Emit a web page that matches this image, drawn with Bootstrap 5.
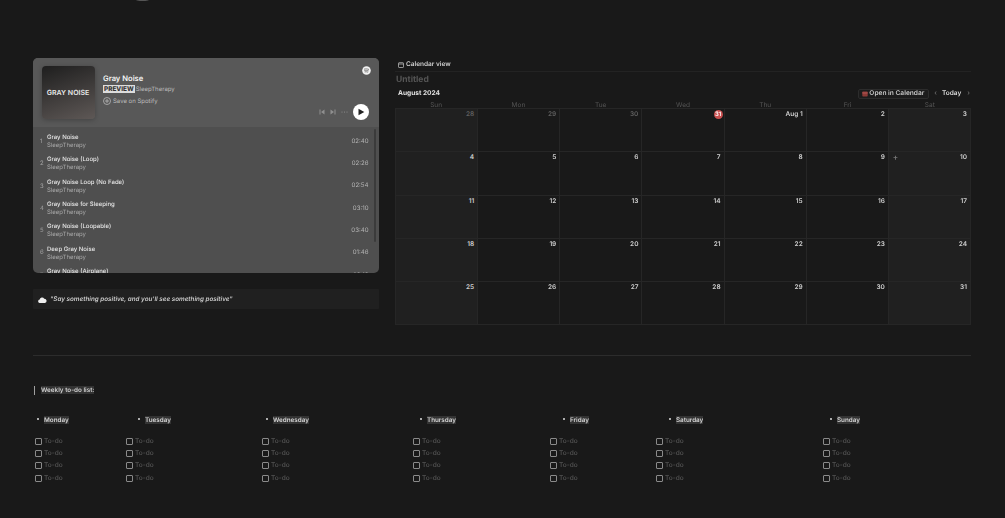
<!DOCTYPE html>
<html lang="en"><head><meta charset="utf-8"><title>Dashboard</title>
<link href="https://cdn.jsdelivr.net/npm/bootstrap@5.3.0/dist/css/bootstrap.min.css" rel="stylesheet">
<style>
html,body{height:518px;overflow:hidden}
body{background:#191919;color:#d4d4d4;font-family:Inter,"Liberation Sans",sans-serif;font-size:6.5px;line-height:1.2;position:relative;text-rendering:geometricPrecision}
.page{width:1005px;height:518px;padding:58px 34px 0 33px;filter:blur(.4px)}
.topcurve{position:absolute;left:135px;top:-3px;width:15px;height:4px;border-radius:50%;background:#555}
.leftcol{width:346px;flex:none}
.rightcol{width:576px;flex:none;margin-left:16px}
.player{height:215px;background:#4f4f4f;border-radius:5px;overflow:hidden;position:relative}
.phead{height:69px;background:#585858;padding:8px 0 0 8.5px;position:relative}
.cover{width:53px;height:53px;flex:none;border-radius:4px;background:linear-gradient(160deg,#1e1e1e,#5e5856);color:#e8e8e8;font-weight:600;font-size:7px;padding-top:1px;box-shadow:0 1px 5px rgba(0,0,0,.25)}
.pinfo{margin-left:8.5px;padding-top:8px}
.ptitle{font-size:7.6px;font-weight:600;color:#f4f4f4;line-height:10px}
.psub{font-size:6px;color:#bcbcbc;line-height:8px;margin-top:1px}
.prev{background:#dcdcdc;color:#333;font-weight:800;font-size:6.4px;margin-right:1px;padding:0 1px}
.psave{font-size:6px;color:#bcbcbc;margin-top:2.5px;line-height:9px;gap:2px}
.sp-logo{position:absolute;right:8.5px;top:8px}
.pctrl{position:absolute;right:10px;top:46px;gap:5px}
.pplay{width:16px;height:16px;border-radius:50%;background:#fff}
.plist{padding:3.4px 0 0 7px;height:146px;overflow:hidden}
.track{height:22.3px;padding-right:10.5px}
.tnum{width:7px;color:#a5a5a5;font-size:6px}
.tname{font-size:6px;font-weight:500;color:#e6e6e6;line-height:8px;margin-top:1px}
.tart{font-size:6px;color:#a8a8a8;line-height:8px}
.tdur{font-size:6.1px;color:#b5b5b5}
.scrollthumb{position:absolute;right:3px;top:71px;width:2px;height:113px;border-radius:1px;background:#3b3b3b}
.quote{margin-top:16px;height:20px;background:#202020;padding:1px 0 0 5px;color:#c8c8c8;font-style:italic;font-weight:600;font-size:6.3px;border-radius:1px;gap:3px}
.calhead{height:12px;color:#d0d0d0;font-weight:600;font-size:6.5px;padding:1px 0 0 3px;border-bottom:1px solid #232323;box-sizing:content-box;gap:2px}
.untitled{color:#555;font-weight:700;font-size:8.5px;line-height:10px;margin-top:3px;padding-left:1px}
.tool{height:12px;margin-top:3px;padding:0 1px 0 3px;font-size:6.5px;font-weight:600;color:#dcdcdc}
.opencal{border:1px solid #2c2c2c;border-radius:2px;padding:0 4px 0 3px;height:10px;color:#c8c8c8;background:#1c1c1c;font-size:6.6px;gap:1px}
.calmo{font-size:6.6px;font-weight:700;color:#e0e0e0}
.dim{color:#6a6a6a}
.chev{margin-left:5px}
.today{margin:0 6px 0 5px}
.wk{display:grid;grid-template-columns:repeat(7,1fr);color:#555;font-size:6.5px;text-align:center;height:9px;line-height:12px;margin-top:-1px}
.cal{display:grid;grid-template-columns:repeat(7,1fr);grid-auto-rows:43.3px;border-top:1px solid #262626;border-left:1px solid #262626}
.day{border-right:1px solid #262626;border-bottom:1px solid #262626;padding:2px 3px;text-align:right;font-size:6.5px;font-weight:600;color:#cfcfcf;position:relative}
.wkend{background:#202020}
.old{color:#5f5f5f}
.todaybadge{display:inline-block;width:9px;height:9px;line-height:9px;border-radius:50%;background:#c94f4f;color:#fff;text-align:center;font-size:6px;margin:-1px -2px 0 0}
.plus{position:absolute;left:4px;top:1px;color:#777;font-size:8px}
.rule{height:1px;background:#2c2c2c;margin-top:30px}
.wtitle{margin-top:30px;height:9px;margin-left:1px;border-left:1px solid #a0a0a0;padding-left:6px;font-weight:600;font-size:6.3px;color:#cfcfcf;line-height:9px}
.hl{background:#333}
.todos{display:grid;grid-template-columns:92px 136px 151px 137px 106px 167px 1fr;margin-top:20.5px;margin-left:1px}
.dayname{font-weight:600;font-size:6.3px;color:#d4d4d4;line-height:9px;height:9px;margin-bottom:12px}
.dayname::before{content:"";display:inline-block;width:2px;height:2px;border-radius:50%;background:#ddd;vertical-align:1.5px;margin-right:5px}
.p4{padding-left:3px}.p13{padding-left:12px}.p5{padding-left:4px}.p9{padding-left:7px}.p14{padding-left:13px}.p8{padding-left:7px}
.todo{height:12.2px;color:#565656;font-size:6.5px;line-height:9px;font-weight:500}
.firstcol .todo{padding-left:1px}
.cbx{border:1px solid #8a8a8a;border-radius:1px;flex:none;margin:1px 2px 0 0;box-sizing:content-box;width:5px;height:5px}
</style></head><body>
<div class="topcurve"></div>
<div class="page">
 <div class="d-flex">
  <div class="leftcol">
   <div class="player">
    <div class="phead d-flex">
     <div class="cover d-flex align-items-center justify-content-center">GRAY NOISE</div>
     <div class="pinfo">
      <div class="ptitle">Gray Noise</div>
      <div class="psub"><span class="prev">PREVIEW</span>SleepTherapy</div>
      <div class="psave d-flex align-items-center"><svg width="8" height="8" viewBox="0 0 8 8" fill="none" stroke="#c4c4c4" stroke-width=".7"><circle cx="4" cy="4" r="3.5"/><path d="M4 2v4M2 4h4"/></svg><span>Save on Spotify</span></div>
     </div>
     <svg class="sp-logo" width="9" height="9" viewBox="0 0 9 9"><circle cx="4.5" cy="4.5" r="4.3" fill="#f2f2f2"/><path d="M2 3.2c1.8-.5 3.5-.4 5 .3M2.3 4.6c1.5-.4 3-.3 4.3.3M2.6 5.9c1.2-.3 2.4-.2 3.5.3" stroke="#585858" stroke-width=".7" fill="none"/></svg>
     <div class="pctrl d-flex align-items-center">
      <svg width="6" height="6" viewBox="0 0 6 6" fill="#8f8f8f"><path d="M.5.5h1v5h-1zM5.5.5v5L2 3z"/></svg>
      <svg width="6" height="6" viewBox="0 0 6 6" fill="#8f8f8f"><path d="M4.5.5h1v5h-1zM.5.5v5L4 3z"/></svg>
      <svg width="7" height="4" viewBox="0 0 7 4" fill="#9a9a9a"><circle cx="1" cy="2" r=".5"/><circle cx="3.5" cy="2" r=".5"/><circle cx="6" cy="2" r=".5"/></svg>
      <div class="pplay d-flex align-items-center justify-content-center"><svg width="8" height="8" viewBox="0 0 8 8" fill="#222"><path d="M1.5.7v6.6L7.3 4z"/></svg></div>
     </div>
    </div>
    <div class="plist">
     <div class="track d-flex align-items-center"><div class="tnum">1</div><div class="flex-grow-1"><div class="tname">Gray Noise</div><div class="tart">SleepTherapy</div></div><div class="tdur">02:40</div></div>
     <div class="track d-flex align-items-center"><div class="tnum">2</div><div class="flex-grow-1"><div class="tname">Gray Noise (Loop)</div><div class="tart">SleepTherapy</div></div><div class="tdur">02:26</div></div>
     <div class="track d-flex align-items-center"><div class="tnum">3</div><div class="flex-grow-1"><div class="tname">Gray Noise Loop (No Fade)</div><div class="tart">SleepTherapy</div></div><div class="tdur">02:54</div></div>
     <div class="track d-flex align-items-center"><div class="tnum">4</div><div class="flex-grow-1"><div class="tname">Gray Noise for Sleeping</div><div class="tart">SleepTherapy</div></div><div class="tdur">03:10</div></div>
     <div class="track d-flex align-items-center"><div class="tnum">5</div><div class="flex-grow-1"><div class="tname">Gray Noise (Loopable)</div><div class="tart">SleepTherapy</div></div><div class="tdur">03:40</div></div>
     <div class="track d-flex align-items-center"><div class="tnum">6</div><div class="flex-grow-1"><div class="tname">Deep Gray Noise</div><div class="tart">SleepTherapy</div></div><div class="tdur">01:46</div></div>
     <div class="track d-flex align-items-center"><div class="tnum">7</div><div class="flex-grow-1"><div class="tname">Gray Noise (Airplane)</div><div class="tart">SleepTherapy</div></div><div class="tdur">02:12</div></div>
    </div>
    <div class="scrollthumb"></div>
   </div>
   <div class="quote d-flex align-items-center"><svg width="9" height="6" viewBox="0 0 9 6" fill="#eee"><path d="M2 6a1.7 1.7 0 0 1-.3-3.4A2.4 2.4 0 0 1 6.2 1.7 2.2 2.2 0 0 1 7 6z"/></svg><span>"Say something positive, and you'll see something positive"</span></div>
  </div>
  <div class="rightcol">
   <div class="calhead d-flex align-items-center"><svg width="6" height="6" viewBox="0 0 6 6" fill="none" stroke="#c8c8c8" stroke-width=".7"><rect x=".5" y=".7" width="5" height="4.8" rx=".6"/><path d="M.5 2h5"/></svg><span>Calendar view</span></div>
   <div class="untitled">Untitled</div>
   <div class="tool d-flex align-items-center">
    <div class="calmo me-auto">August 2024</div>
    <div class="opencal d-flex align-items-center"><svg width="6" height="6" viewBox="0 0 6 6"><rect x=".3" y=".5" width="5.4" height="5" rx=".7" fill="#8c3a36"/><path d="M.3 2h5.4" stroke="#d77" stroke-width=".5"/></svg>Open in Calendar</div>
    <span class="dim chev">‹</span><span class="today">Today</span><span class="dim">›</span>
   </div>
   <div class="wk"><div>Sun</div><div>Mon</div><div>Tue</div><div>Wed</div><div>Thu</div><div>Fri</div><div>Sat</div></div>
   <div class="cal">
    <div class="day wkend old">28</div><div class="day old">29</div><div class="day old">30</div><div class="day"><span class="todaybadge">31</span></div><div class="day">Aug 1</div><div class="day">2</div><div class="day wkend">3</div>
    <div class="day wkend">4</div><div class="day">5</div><div class="day">6</div><div class="day">7</div><div class="day">8</div><div class="day">9</div><div class="day wkend"><span class="plus">+</span>10</div>
    <div class="day wkend">11</div><div class="day">12</div><div class="day">13</div><div class="day">14</div><div class="day">15</div><div class="day">16</div><div class="day wkend">17</div>
    <div class="day wkend">18</div><div class="day">19</div><div class="day">20</div><div class="day">21</div><div class="day">22</div><div class="day">23</div><div class="day wkend">24</div>
    <div class="day wkend">25</div><div class="day">26</div><div class="day">27</div><div class="day">28</div><div class="day">29</div><div class="day">30</div><div class="day wkend">31</div>
   </div>
  </div>
 </div>
 <div class="rule"></div>
 <div class="wtitle"><span class="hl">Weekly to-do list:</span></div>
 <div class="todos">
  <div class="firstcol"><div class="dayname p4"><span class="hl">Monday</span></div><div class="todo d-flex"><div class="cbx"></div>To-do</div><div class="todo d-flex"><div class="cbx"></div>To-do</div><div class="todo d-flex"><div class="cbx"></div>To-do</div><div class="todo d-flex"><div class="cbx"></div>To-do</div></div>
  <div><div class="dayname p13"><span class="hl">Tuesday</span></div><div class="todo d-flex"><div class="cbx"></div>To-do</div><div class="todo d-flex"><div class="cbx"></div>To-do</div><div class="todo d-flex"><div class="cbx"></div>To-do</div><div class="todo d-flex"><div class="cbx"></div>To-do</div></div>
  <div><div class="dayname p5"><span class="hl">Wednesday</span></div><div class="todo d-flex"><div class="cbx"></div>To-do</div><div class="todo d-flex"><div class="cbx"></div>To-do</div><div class="todo d-flex"><div class="cbx"></div>To-do</div><div class="todo d-flex"><div class="cbx"></div>To-do</div></div>
  <div><div class="dayname p9"><span class="hl">Thursday</span></div><div class="todo d-flex"><div class="cbx"></div>To-do</div><div class="todo d-flex"><div class="cbx"></div>To-do</div><div class="todo d-flex"><div class="cbx"></div>To-do</div><div class="todo d-flex"><div class="cbx"></div>To-do</div></div>
  <div><div class="dayname p14"><span class="hl">Friday</span></div><div class="todo d-flex"><div class="cbx"></div>To-do</div><div class="todo d-flex"><div class="cbx"></div>To-do</div><div class="todo d-flex"><div class="cbx"></div>To-do</div><div class="todo d-flex"><div class="cbx"></div>To-do</div></div>
  <div><div class="dayname p14"><span class="hl">Saturday</span></div><div class="todo d-flex"><div class="cbx"></div>To-do</div><div class="todo d-flex"><div class="cbx"></div>To-do</div><div class="todo d-flex"><div class="cbx"></div>To-do</div><div class="todo d-flex"><div class="cbx"></div>To-do</div></div>
  <div><div class="dayname p8"><span class="hl">Sunday</span></div><div class="todo d-flex"><div class="cbx"></div>To-do</div><div class="todo d-flex"><div class="cbx"></div>To-do</div><div class="todo d-flex"><div class="cbx"></div>To-do</div><div class="todo d-flex"><div class="cbx"></div>To-do</div></div>
 </div>
</div>
</body></html>
